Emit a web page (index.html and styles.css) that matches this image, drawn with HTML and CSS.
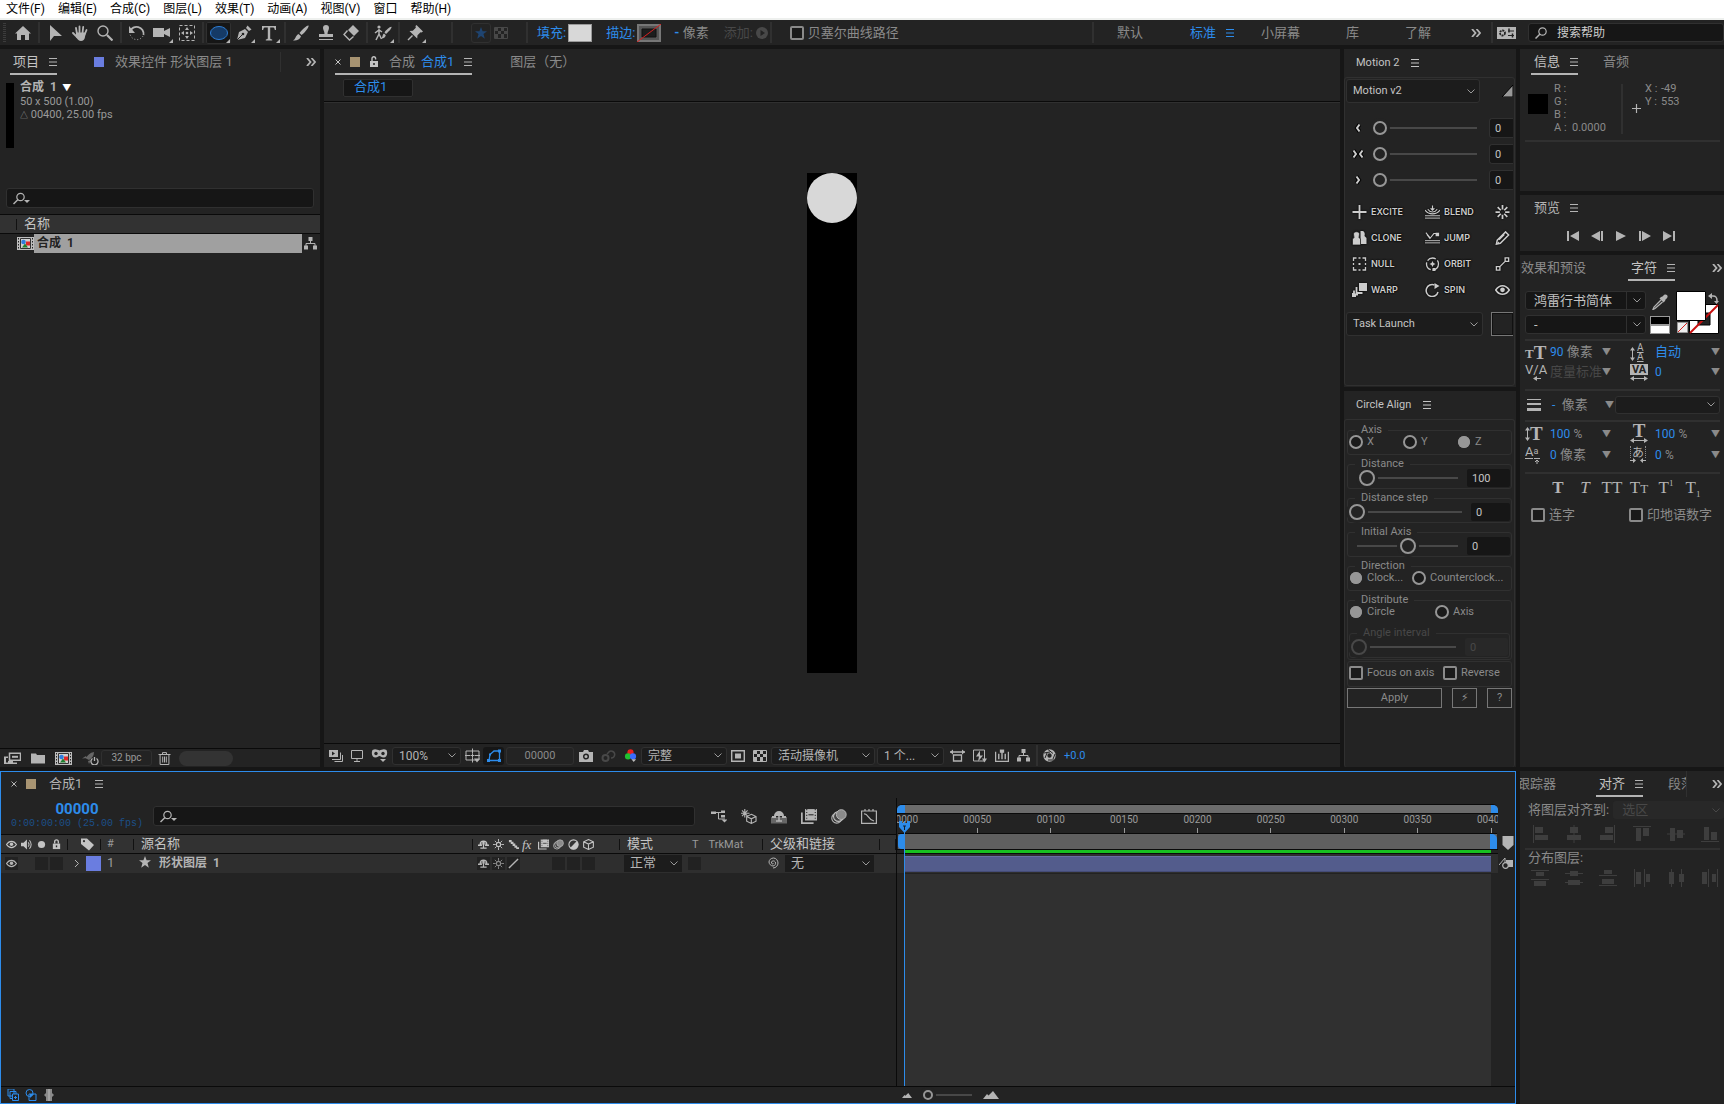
FILE: index.html
```html
<!DOCTYPE html>
<html lang="zh-CN">
<head>
<meta charset="utf-8">
<title>合成 1</title>
<link rel="stylesheet" href="styles.css">
</head>
<body>
<svg class="sprite" aria-hidden="true">
  <symbol id="menu" viewBox="0 0 8 8"><path d="M0 .5h8M0 4h8M0 7.5h8" stroke="currentColor"/></symbol>
  <symbol id="more" viewBox="0 0 10 8"><path d="M1 0l3.5 4L1 8M5.5 0L9 4 5.5 8" fill="none" stroke="currentColor" stroke-width="1.8"/></symbol>
  <symbol id="close" viewBox="0 0 6 6"><path d="M.5.5l5 5M5.5.5l-5 5" stroke="currentColor"/></symbol>
  <symbol id="chev" viewBox="0 0 8 5"><path d="M.5.5L4 4 7.5.5" fill="none" stroke="currentColor"/></symbol>
  <symbol id="home" viewBox="0 0 16 16"><path d="M8 1l8 7.5h-2V15h-4v-5H6v5H2V8.500H0z" fill="currentColor"/></symbol>
  <symbol id="arrow" viewBox="0 0 16 16"><path d="M3 0v16l4-5h8z" fill="currentColor"/></symbol>
  <symbol id="hand" viewBox="0 0 16 16"><path d="M5 9L4 3M7.500 8V1.500M10.500 8l.7-6M12.500 10l2-5M1 8l4 4" stroke="currentColor" stroke-width="1.8" stroke-linecap="round" fill="none"/><path d="M4 7.500h9.500L13 12c-.3 2.500-2 4-4 4s-3.500-1.500-5-4z" fill="currentColor"/></symbol>
  <symbol id="zoomt" viewBox="0 0 16 16"><circle cx="6" cy="6" r="5" fill="none" stroke="currentColor" stroke-width="1.4"/><path d="M10 10l5.500 5.500" stroke="currentColor" stroke-width="2.2"/></symbol>
  <symbol id="rotate" viewBox="0 0 16 16"><path d="M1 6.500A7 7 0 0 1 14.500 10" fill="none" stroke="currentColor" stroke-width="1.8"/><path d="M0 1v7h6z" fill="currentColor"/><path d="M14 11A7 7 0 0 1 1 9" fill="none" stroke="currentColor" stroke-dasharray="1 2"/></symbol>
  <symbol id="cam" viewBox="0 0 18 16"><path d="M0 3h11v3l6-3v9l-6-3v3H0z" fill="currentColor"/></symbol>
  <symbol id="panb" viewBox="0 0 16 16"><path d="M.5.5h15v15H.5z" fill="none" stroke="currentColor" stroke-dasharray="3 2"/><path d="M8 2l2 3H6zM8 14l2-3H6zM2 8l3-2v4zM14 8l-3-2v4z" fill="currentColor"/><circle cx="8" cy="8" r="1.3" fill="currentColor"/></symbol>
  <symbol id="ell" viewBox="0 0 18 14"><ellipse cx="9" cy="7" rx="8.5" ry="6.5" fill="#153a66" stroke="#2f7fd6"/></symbol>
  <symbol id="pen" viewBox="0 0 16 16"><path d="M1 15L3 7l6-3 3 3-3 6zM10 3l1.500-2.500 4 4L13 6z" fill="currentColor"/><path d="M1 15l6-6" stroke="#232323"/><circle cx="7" cy="9" r="1.3" fill="#232323"/></symbol>
  <symbol id="type" viewBox="0 0 16 16"><path d="M1 1h14v4h-1.200c-.3-2-.8-2.500-2.300-2.500H9.200V13c0 1 .5 1.300 2 1.500v.9H4.800v-.9c1.500-.2 2-.5 2-1.500V2.500H4.500C3 2.500 2.500 3 2.200 5H1z" fill="currentColor"/></symbol>
  <symbol id="brush" viewBox="0 0 16 16"><path d="M15.500.5c1 1-4 7.500-7 9.500L6.500 8c2-3 8-8.500 9-7.500zM5.500 9L8 11.300C7 15 3 16 0 15.500 3 14 2 11 5.500 9z" fill="currentColor"/></symbol>
  <symbol id="stamp" viewBox="0 0 16 16"><path d="M5 3a3 3 0 0 1 6 0c0 2-1.500 3-1.500 6H15v3H1V9h5.500C6.500 6 5 5 5 3z" fill="currentColor"/><path d="M1 14.500h14" stroke="currentColor"/></symbol>
  <symbol id="eraser" viewBox="0 0 16 16"><path d="M10 0l6 6-5 5-6-6z" fill="currentColor"/><path d="M4.500 5.500L1 9.500l5.500 5.500h0l4-3.500" fill="none" stroke="currentColor" stroke-width="1.4"/></symbol>
  <symbol id="roto" viewBox="0 0 18 16"><circle cx="5" cy="2" r="1.6" fill="currentColor"/><path d="M5 4v5l-3 6M5 9l2.500 5M1 8l4-3 3 2" stroke="currentColor" stroke-width="1.5" fill="none"/><path d="M17.500 2c.6.8-3 5-5.500 7l-1.500-1.500C12 5 16.800 1 17.500 2zM10 8.500l1.800 1.800C11 13 9 14 7 13.500c2-1 1-3.500 3-5z" fill="currentColor"/></symbol>
  <symbol id="pin" viewBox="0 0 16 16"><path d="M9.500 0L16 6.500l-1.500 1-1-.3-3 3-.3 3.300L5.500 9l-3-3 3.300-.3 3-3L8.500 1z" fill="currentColor"/><path d="M5.500 10.500L1 15" stroke="currentColor" stroke-width="1.5"/></symbol>
  <symbol id="star" viewBox="0 0 12 12"><path d="M6 0l1.600 4.200H12L8.500 7l1.300 4.700L6 9 2.200 11.700 3.500 7 0 4.200h4.400z" fill="currentColor"/></symbol>
  <symbol id="checker" viewBox="0 0 14 12"><path d="M.5.5h13v11H.5z" fill="none" stroke="currentColor"/><path d="M1 1h3v3H1zM7 1h3v3H7zM4 4h3v3H4zM10 4h3v3h-3zM1 7h3v4H1zM7 7h3v4H7z" fill="currentColor"/></symbol>
  <symbol id="play" viewBox="0 0 12 12"><circle cx="6" cy="6" r="6" fill="currentColor"/><path d="M4.500 3v6L9 6z" fill="#232323"/></symbol>
  <symbol id="wsp" viewBox="0 0 19 12"><path d="M0 0h19v12H0z" fill="#b4b4b4"/><circle cx="5.500" cy="6" r="2.5" fill="none" stroke="#232323" stroke-width="1.8" stroke-dasharray="2 .8"/><path d="M11 4h6M11 8.500h6" stroke="#232323"/><path d="M12 1.500v4M15.500 6.500v4" stroke="#232323" stroke-width="1.5"/></symbol>
  <symbol id="search" viewBox="0 0 12 12"><circle cx="7.500" cy="4.500" r="3.7" fill="none" stroke="currentColor" stroke-width="1.2"/><path d="M5 7L.5 11.500" stroke="currentColor" stroke-width="1.5"/></symbol>
  <symbol id="searchd" viewBox="0 0 17 12"><circle cx="7.500" cy="4.500" r="3.7" fill="none" stroke="currentColor" stroke-width="1.2"/><path d="M5 7L.5 11.500" stroke="currentColor" stroke-width="1.5"/><path d="M11 7.500h6l-3 3z" fill="currentColor"/></symbol>
  <symbol id="lock" viewBox="0 0 10 12"><path d="M1 5h8v6H1z" fill="currentColor"/><path d="M3 5V3a2 2 0 0 1 4 0v2" fill="none" stroke="currentColor" stroke-width="1.5"/><path d="M5 7v2" stroke="#232323" stroke-width="1.5"/></symbol>
  <symbol id="unlock" viewBox="0 0 10 12"><path d="M0 5h8v6H0z" fill="currentColor"/><path d="M2 5V2.500a1.800 1.800 0 0 1 3.600 0v1" fill="none" stroke="currentColor" stroke-width="1.4"/><path d="M4 7v2" stroke="#232323" stroke-width="1.5"/></symbol>
  <symbol id="comp" viewBox="0 0 17 13"><path d="M0 0h17v13H0z" fill="#bdbdbd"/><path d="M1.500 1v12M15.500 1v12" stroke="#232323" stroke-dasharray="1.5 1.5"/><path d="M3.500 1.500h10v10h-10z" fill="#d0d0d0" stroke="#333"/><circle cx="6.500" cy="5" r="2.3" fill="#2f7dde"/><path d="M9 4.500h4v4H9z" fill="#e02828"/><path d="M5 10.500l3-4 3 4z" fill="#208030"/></symbol>
  <symbol id="flow" viewBox="0 0 13 13"><path d="M4.500 0h4v4h-4zM0 8.500h4v4H0zM9 8.500h4v4H9z" fill="currentColor"/><path d="M6.500 4v3M2 9V6.500h9V9" fill="none" stroke="currentColor"/></symbol>
  <symbol id="interp" viewBox="0 0 17 12"><path d="M5.500.8h11v7h-11z" fill="none" stroke="currentColor" stroke-width="1.5"/><path d="M8 4.300h6" stroke="currentColor" stroke-width="2"/><path d="M0 4h4v1.500H2V10h11v1.500H0z" fill="currentColor"/><path d="M4 8.500h5V11H4z" fill="currentColor"/></symbol>
  <symbol id="folder" viewBox="0 0 14 11"><path d="M0 1h5l1 1.500h8V11H0z" fill="currentColor"/></symbol>
  <symbol id="rocket" viewBox="0 0 17 13"><path d="M12 0c0 4-2 6-5 8L4 6.500C5.500 3 8 .5 12 0zM0 6.500L4 4l1 2zM6 9l3-1-2 4z" fill="#666"/><path d="M10.500 6.500a3.500 3.500 0 1 0 4 0M12.500 5v4" fill="none" stroke="currentColor" stroke-width="1.3"/></symbol>
  <symbol id="trash" viewBox="0 0 12 13"><path d="M0 2.500h12M4 2V.6h4V2M1.600 3v9.500h8.800V3M4.200 4.500v6M6 4.500v6M7.800 4.500v6" fill="none" stroke="currentColor"/></symbol>
  <symbol id="prev" viewBox="0 0 14 12"><path d="M0 0h9v7H0z" fill="currentColor"/><path d="M3 1.500v4l3-2z" fill="#232323"/><path d="M3 9.500h8.500V2.500M5.500 11.500h8V5" fill="none" stroke="currentColor"/></symbol>
  <symbol id="monitor" viewBox="0 0 12 12"><path d="M.5.5h11v8H.5zM3 11.500h6M6 9v2" fill="none" stroke="currentColor"/></symbol>
  <symbol id="mask" viewBox="0 0 17 13"><path d="M1.500 1c3-1.500 5 0 7 .5C10.500 1 12.500-.5 15.500 1 17 4 16 8.500 12.500 8.500 10.500 8.500 9.500 7 8.500 7S6.500 8.500 4.500 8.500C1 8.500 0 4 1.500 1z" fill="currentColor"/><circle cx="5" cy="4.500" r="1.7" fill="#232323"/><circle cx="12" cy="4.500" r="1.7" fill="#232323"/><path d="M9 10h6l-3 3z" fill="currentColor"/></symbol>
  <symbol id="grid" viewBox="0 0 15 14"><path d="M1 2.500h13v9H1zM7.500 0v5M7.500 9v5M0 7h5M10 7h5M5.500 7h4M7.500 5v4" fill="none" stroke="currentColor"/><path d="M9 10h6l-3 4z" fill="currentColor"/></symbol>
  <symbol id="shape" viewBox="0 0 14 13"><path d="M2 11L3 5l4-3.500h5.500V11z" fill="none" stroke="currentColor" stroke-width="1.3"/><path d="M0 9.500h3v3H0zM11 9.500h3v3h-3zM11 0h3v3h-3zM2 4h2v2H2z" fill="currentColor"/></symbol>
  <symbol id="photo" viewBox="0 0 14 12"><path d="M0 2h4l1-2h4l1 2h4v10H0z" fill="currentColor"/><circle cx="7" cy="6.500" r="2.3" fill="none" stroke="#232323" stroke-width="1.5"/></symbol>
  <symbol id="ghost" viewBox="0 0 15 13"><circle cx="4.500" cy="9" r="3" fill="none" stroke="currentColor" stroke-width="2"/><path d="M7 4a3.500 3.500 0 1 1 3 5M6 5l3-3" fill="none" stroke="currentColor" stroke-width="1.5"/></symbol>
  <symbol id="rgb" viewBox="0 0 12 14"><circle cx="6" cy="3.500" r="3.3" fill="#e82020"/><circle cx="3.300" cy="8" r="3.3" fill="#20c030"/><circle cx="8.700" cy="8" r="3.3" fill="#3a6cff"/><path d="M7 11h5l-2.500 3z" fill="#bbb"/></symbol>
  <symbol id="roi" viewBox="0 0 14 12"><path d="M.7.7h12.600v10.600H.7z" fill="none" stroke="currentColor" stroke-width="1.4"/><path d="M4 3.500h6v5H4z" fill="currentColor"/></symbol>
  <symbol id="par" viewBox="0 0 15 12"><path d="M0 2.500h15M3.500 5.500h8v6h-8z" fill="none" stroke="currentColor" stroke-width="1.3"/><path d="M3 0v5L0 2.500zM12 0v5l3-2.500z" fill="currentColor"/></symbol>
  <symbol id="fast" viewBox="0 0 14 13"><path d="M.5.5h11v11H.5z" fill="none" stroke="currentColor"/><path d="M7 1L3 7h3l-1 5 5-6H7z" fill="currentColor"/><path d="M9 9h5l-2.500 4z" fill="currentColor"/></symbol>
  <symbol id="tlb" viewBox="0 0 13 12"><path d="M.5 2v9h12V2M3.500 4v5M9.500 4v5M6.500 1v8" fill="none" stroke="currentColor" stroke-width="1.3"/><path d="M4.500 0h4v3h-4z" fill="currentColor"/></symbol>
  <symbol id="shutter" viewBox="0 0 13 13"><circle cx="6.500" cy="6.500" r="4.2" fill="none" stroke="currentColor" stroke-width="4"/><path d="M1 4l6-1M5 .5l5 4M12 5l-2 5M11 11H5M2 9l2-5" stroke="#232323"/></symbol>
  <symbol id="eye" viewBox="0 0 14 10"><path d="M.7 5C3 1.500 5 1 7 1s4 .5 6.300 4C11 8.500 9 9 7 9S3 8.500.7 5z" fill="none" stroke="currentColor" stroke-width="1.5"/><circle cx="7" cy="4.800" r="2.2" fill="currentColor"/></symbol>
  <symbol id="speaker" viewBox="0 0 13 12"><path d="M0 4h3l4-4v12L3 8H0z" fill="currentColor"/><path d="M8.500 3.500q2 2.500 0 5M10 1q4 5 0 10" fill="none" stroke="currentColor" stroke-width="1.2"/></symbol>
  <symbol id="dot" viewBox="0 0 8 8"><circle cx="4" cy="4" r="3.2" fill="currentColor"/></symbol>
  <symbol id="tag" viewBox="0 0 13 12"><path d="M0 0h6l7 6.500L8 12 0 5.500z" fill="currentColor"/><circle cx="3" cy="2.700" r="1.1" fill="#323232"/></symbol>
  <symbol id="shy" viewBox="0 0 14 12"><path d="M2 6a5 5 0 0 1 10 0zM0 6h5v2H0zM9 6h5v2H9z" fill="currentColor"/><path d="M7 5v6M3 10.500h8" stroke="currentColor" stroke-width="1.5"/><path d="M5 3v3M9 3v3" stroke="#323232"/></symbol>
  <symbol id="sun" viewBox="0 0 12 12"><circle cx="6" cy="6" r="2.3" fill="none" stroke="currentColor" stroke-width="1.2"/><path d="M6 0v3M6 9v3M0 6h3M9 6h3M2 2l2 2M8 8l2 2M10 2L8 4M4 8l-2 2" stroke="currentColor"/></symbol>
  <symbol id="qual" viewBox="0 0 12 12"><path d="M1 1h3v2h2v2h2v2h2v2h2v2H9V9.500H7v-2H5v-2H3v-2H1z" fill="currentColor"/></symbol>
  <symbol id="slash" viewBox="0 0 12 12"><path d="M1 11L11 1" stroke="currentColor" stroke-width="1.5"/></symbol>
  <symbol id="film" viewBox="0 0 14 13"><path d="M3.500 0H14v10H3.500z" fill="currentColor"/><path d="M0 3h1.500v8.500H11V13H0z" fill="currentColor"/><path d="M5 0v10M12.500 0v10" stroke="#323232" stroke-dasharray="1 1.5"/><path d="M6.500 5h4.500" stroke="#323232"/></symbol>
  <symbol id="blur" viewBox="0 0 14 13"><circle cx="5" cy="8" r="4.3" fill="none" stroke="currentColor"/><circle cx="6.500" cy="6.500" r="4.3" fill="#444" stroke="#bbb"/><circle cx="9" cy="4.800" r="4.3" fill="#8a8a8a" stroke="#bbb" stroke-width=".8"/></symbol>
  <symbol id="adj" viewBox="0 0 12 12"><circle cx="6" cy="6" r="5" fill="none" stroke="currentColor" stroke-width="1.2"/><path d="M9.700 2.300a5 5 0 0 1-7.400 7.400z" fill="currentColor"/></symbol>
  <symbol id="cube" viewBox="0 0 12 12"><path d="M6 .6L11.300 3v6L6 11.400.7 9V3zM.7 3L6 5.500 11.300 3M6 5.500v6" fill="none" stroke="currentColor" stroke-width="1.2"/></symbol>
  <symbol id="mini" viewBox="0 0 16 12"><path d="M0 1h5v2.500H0zM10 0h4v2.500h-4zM10 4.500h4V7h-4z" fill="currentColor"/><path d="M5 2h5M7.500 2v6.500H10M10 8.500h4" fill="none" stroke="currentColor"/><path d="M10.500 9h6l-3 3z" fill="currentColor"/></symbol>
  <symbol id="draft" viewBox="0 0 17 16"><path d="M4 0v9M0 4.500h9M1 1.500l6 6M7 1.500l-6 6" stroke="currentColor" stroke-width="1.2"/><path d="M11 5.600l5 2.400v5L11 15.400 6 13V8zM6 8l5 2.500L16 8M11 10.500v5" fill="#232323" stroke="currentColor" stroke-width="1.2"/></symbol>
  <symbol id="shyw" viewBox="0 0 16 14"><path d="M0 7.500h16V14H0z" fill="#666"/><path d="M3 6.500a5 5 0 0 1 10 0zM1 6.500h4v2H1zM11 6.500h4v2h-4z" fill="currentColor"/><path d="M8 6v6M5 11.500h6" stroke="currentColor" stroke-width="1.5"/></symbol>
  <symbol id="graph" viewBox="0 0 16 15"><path d="M.6 2h14.800v12.400H.6zM4 0v2M8 0v2M12 0v2M3 5c4-1 4 6 10 7" fill="none" stroke="currentColor" stroke-width="1.2"/></symbol>
  <symbol id="spiral" viewBox="0 0 12 12"><path d="M6.500 6.500c-1 1-2.500 0-2-1.500s3-1.500 3.800 0S8 9 6 9 2 7 2 5 4 1 6.500 1 11 3.500 11 6s-2 5-5 5" fill="none" stroke="currentColor"/></symbol>
  <symbol id="shield" viewBox="0 0 12 14"><path d="M.5 0h11v9L6 14 .5 9z" fill="currentColor"/></symbol>
  <symbol id="bin" viewBox="0 0 14 12"><path d="M7 3h7v7H7z" fill="currentColor"/><path d="M0 8l6-7v6" fill="none" stroke="currentColor"/><circle cx="6.500" cy="8.500" r="2.8" fill="#232323" stroke="currentColor" stroke-width="1.2"/></symbol>
  <symbol id="lay" viewBox="0 0 12 12"><path d="M1 0h6v7H1zM3 2.500h6v7H3z" fill="none" stroke="currentColor"/><path d="M5.500 5h6v6.500h-6z" fill="#232323" stroke="currentColor"/><path d="M8.500 7v3M7 8.500h3" stroke="currentColor"/></symbol>
  <symbol id="modes" viewBox="0 0 12 12"><circle cx="4.500" cy="4" r="3.5" fill="none" stroke="currentColor"/><path d="M4 5h7v6.500H4z" fill="none" stroke="currentColor"/><path d="M5 5h4L5 9z" fill="currentColor"/></symbol>
  <symbol id="brace" viewBox="0 0 10 12"><path d="M2 0h6v4l2 2-2 2v4H2V8L0 6l2-2z" fill="#8a8a8a"/><path d="M5 0v12" stroke="#bbb"/></symbol>
  <symbol id="mtn" viewBox="0 0 16 8"><path d="M0 8l4-5 1.500 1.500L10 0l6 8z" fill="currentColor"/></symbol>
  <symbol id="plus" viewBox="0 0 14 14"><path d="M7 0v14M0 7h14" stroke="currentColor" stroke-width="1.8"/></symbol>
  <symbol id="blend" viewBox="0 0 16 14"><path d="M0 11h16M0 13.500h16" stroke="currentColor"/><path d="M0 5q3 4 8 4t8-4M3 4q2 3 5 3t5-3M8 0v5M6 3l2 2 2-2" fill="none" stroke="currentColor" stroke-width="1.2"/></symbol>
  <symbol id="burst" viewBox="0 0 16 16"><path d="M8 0v5M8 11v5M0 8h5M11 8h5M2.500 2.500L6 6M10 10l3.500 3.500M13.500 2.500L10 6M6 10l-3.500 3.500" stroke="currentColor" stroke-width="2"/></symbol>
  <symbol id="clone" viewBox="0 0 14 14"><path d="M8 0c3-.5 5 1 4 5l2 2v6H8z" fill="currentColor"/><path d="M1 3c0-3 6-3 6 0L6.500 6.500 8 8v6H0V8l1.500-1.500z" fill="currentColor" stroke="#232323" stroke-width=".8"/></symbol>
  <symbol id="jump" viewBox="0 0 17 12"><path d="M0 11.500h17M0 9h17" stroke="currentColor"/><path d="M1 0l5 6 4-5h3M2 2l4 5" fill="none" stroke="currentColor" stroke-width="1.2"/><path d="M12 0h4v4h-4z" fill="currentColor"/></symbol>
  <symbol id="pencil" viewBox="0 0 16 16"><path d="M1 15l1-4.500L11.500 1l3.500 3.500L5.500 14zM4 10l6-6" fill="none" stroke="currentColor" stroke-width="1.7"/><path d="M1 15l2-3 1.500 1.500z" fill="currentColor"/></symbol>
  <symbol id="null" viewBox="0 0 14 14"><path d="M1 4V1h3M10 1h3v3M13 10v3h-3M4 13H1v-3M6 1h2M1 6v2M13 6v2M6 13h2" fill="none" stroke="currentColor" stroke-width="1.3"/><path d="M6 6h2v2H6z" fill="currentColor"/></symbol>
  <symbol id="orbit" viewBox="0 0 14 14"><circle cx="7" cy="7" r="6" fill="none" stroke="currentColor" stroke-dasharray="9 2" stroke-width="1.3"/><path d="M7 4l1 2 2 1-2 1-1 2-1-2-2-1 2-1zM7 11h3v3H7z" fill="currentColor"/></symbol>
  <symbol id="link" viewBox="0 0 16 16"><path d="M11 1h4v4h-4zM1 11h4v4H1zM5 11l6-6" fill="none" stroke="currentColor" stroke-width="1.5"/></symbol>
  <symbol id="warp" viewBox="0 0 15 14"><path d="M7 0h8v8H7z" fill="currentColor"/><path d="M4.500 4v6h6M2 7.500v4h4M.5 10v3.500H4" fill="none" stroke="currentColor" stroke-width="1.8"/></symbol>
  <symbol id="spin" viewBox="0 0 14 14"><path d="M12.500 9A6 6 0 1 1 9 2" fill="none" stroke="currentColor" stroke-width="1.5"/><path d="M9 0l5 3-5 3z" fill="currentColor"/></symbol>
  <symbol id="tri" viewBox="0 0 11 12"><path d="M0 12L11 0v12z" fill="#999" stroke="#000"/></symbol>
  <symbol id="el" viewBox="0 0 12 10"><path d="M7.500 1.500L5 5l2.500 3.500" fill="none" stroke="#000" stroke-width="4"/><path d="M7.500 1.500L5 5l2.500 3.500" fill="none" stroke="#ccc" stroke-width="2"/></symbol>
  <symbol id="er" viewBox="0 0 12 10"><path d="M4.500 1.500L7 5 4.500 8.500" fill="none" stroke="#000" stroke-width="4"/><path d="M4.500 1.500L7 5 4.500 8.500" fill="none" stroke="#ccc" stroke-width="2"/></symbol>
  <symbol id="eb" viewBox="0 0 12 10"><path d="M1.500 1.500L4 5 1.500 8.500M10.500 1.500L8 5l2.500 3.500" fill="none" stroke="#000" stroke-width="4"/><path d="M1.500 1.500L4 5 1.500 8.500M10.500 1.500L8 5l2.500 3.500" fill="none" stroke="#ccc" stroke-width="2"/></symbol>
  <symbol id="first" viewBox="0 0 12 10"><path d="M0 0h2v10H0zM12 0v10L3 5z" fill="currentColor"/></symbol>
  <symbol id="back" viewBox="0 0 12 10"><path d="M10 0h2v10h-2zM9 0v10L0 5z" fill="currentColor"/></symbol>
  <symbol id="go" viewBox="0 0 10 10"><path d="M0 0v10l10-5z" fill="currentColor"/></symbol>
  <symbol id="fwd" viewBox="0 0 12 10"><path d="M0 0h2v10H0zM3 0v10l9-5z" fill="currentColor"/></symbol>
  <symbol id="last" viewBox="0 0 12 10"><path d="M10 0h2v10h-2zM0 0v10l9-5z" fill="currentColor"/></symbol>
  <symbol id="dropper" viewBox="0 0 16 16"><path d="M9 3l1.500-.5C12 0 14 0 15 1s1 3-1.500 4.500L13 7l-1.500 1.500-4-4z" fill="currentColor"/><path d="M9 6l-7 7-1 2.500 2-1L10.500 8" fill="none" stroke="currentColor" stroke-width="1.3"/></symbol>
  <symbol id="swap" viewBox="0 0 11 12"><path d="M2 3h3c3 0 4 1 4 5" fill="none" stroke="currentColor" stroke-width="1.6"/><path d="M0 3l4-3v6zM6 8h5l-2.500 3z" fill="currentColor"/></symbol>
  <symbol id="vresize" viewBox="0 0 5 14"><path d="M2.500 1v12" stroke="currentColor"/><path d="M0 3.500L2.500 0 5 3.500zM0 10.500L2.500 14 5 10.500z" fill="currentColor"/></symbol>
  <symbol id="hresize" viewBox="0 0 18 5"><path d="M2 2.500h14" stroke="currentColor"/><path d="M4 0L0 2.500 4 5zM14 0l4 2.500L14 5z" fill="currentColor"/></symbol>
  <symbol id="larrow" viewBox="0 0 8 5"><path d="M2 2.500h6" stroke="currentColor"/><path d="M4 0L0 2.500 4 5z" fill="currentColor"/></symbol>
  <symbol id="base" viewBox="0 0 15 6"><path d="M0 .5h8M9 .5h6" stroke="currentColor"/><path d="M12 2v4M10 4l2-2 2 2" fill="none" stroke="currentColor"/></symbol>
  <symbol id="inarr" viewBox="0 0 16 5"><path d="M0 2.500h4M12 2.500h4" stroke="currentColor"/><path d="M3 0l3 2.500L3 5zM13 0l-3 2.500L13 5z" fill="currentColor"/></symbol>
  <symbol id="lines" viewBox="0 0 14 12"><path d="M0 .5h14" stroke="currentColor"/><path d="M0 5h14" stroke="currentColor" stroke-width="2"/><path d="M0 10.500h14" stroke="currentColor" stroke-width="3"/></symbol>
  <symbol id="al1" viewBox="0 0 18 18"><path d="M2.500 0v18" stroke="currentColor"/><path d="M4 2h8v6H4zM4 10h13v5H4z" fill="currentColor"/></symbol>
  <symbol id="al2" viewBox="0 0 18 18"><path d="M9 0v18" stroke="currentColor"/><path d="M5 2h8v6H5zM2 10h14v5H2z" fill="currentColor"/></symbol>
  <symbol id="al3" viewBox="0 0 18 18"><path d="M15.500 0v18" stroke="currentColor"/><path d="M6 2h8v6H6zM1 10h13v5H1z" fill="currentColor"/></symbol>
  <symbol id="al4" viewBox="0 0 18 18"><path d="M0 1.500h18" stroke="currentColor"/><path d="M3 3h5v13H3zM10 3h6v8h-6z" fill="currentColor"/></symbol>
  <symbol id="al5" viewBox="0 0 18 18"><path d="M0 9h18" stroke="currentColor"/><path d="M3 3h5v13H3zM10 5h6v8h-6z" fill="currentColor"/></symbol>
  <symbol id="al6" viewBox="0 0 18 18"><path d="M0 16.500h18" stroke="currentColor"/><path d="M3 2h5v13H3zM10 7h6v8h-6z" fill="currentColor"/></symbol>
  <symbol id="di1" viewBox="0 0 18 18"><path d="M0 1.500h18M0 10.500h18" stroke="currentColor"/><path d="M5 3h8v4H5zM3 12h12v5H3z" fill="currentColor"/></symbol>
  <symbol id="di2" viewBox="0 0 18 18"><path d="M0 4.500h18M0 13.500h18" stroke="currentColor"/><path d="M5 2h8v5H5zM3 11h12v5H3z" fill="currentColor"/></symbol>
  <symbol id="di3" viewBox="0 0 18 18"><path d="M0 6.500h18M0 16.500h18" stroke="currentColor"/><path d="M5 1h8v4H5zM3 10h12v5H3z" fill="currentColor"/></symbol>
  <symbol id="di4" viewBox="0 0 18 18"><path d="M1.500 0v18M11.500 0v18" stroke="currentColor"/><path d="M3 3h5v12H3zM13 5h4v8h-4z" fill="currentColor"/></symbol>
  <symbol id="di5" viewBox="0 0 18 18"><path d="M4.500 0v18M14.500 0v18" stroke="currentColor"/><path d="M2 3h5v12H2zM12 5h5v8h-5z" fill="currentColor"/></symbol>
  <symbol id="di6" viewBox="0 0 18 18"><path d="M7.500 0v18M16.500 0v18" stroke="currentColor"/><path d="M1 3h5v12H1zM11 5h4v8h-4z" fill="currentColor"/></symbol>
</svg>

<nav class="menubar">
  <a href="#">文件(F)</a><a href="#">编辑(E)</a><a href="#">合成(C)</a><a href="#">图层(L)</a><a href="#">效果(T)</a><a href="#">动画(A)</a><a href="#">视图(V)</a><a href="#">窗口</a><a href="#">帮助(H)</a>
</nav>

<header class="toolbar">
  <div class="tools">
    <i class="grip"></i>
    <button class="tool" aria-label="主页"><svg class="s16"><use href="#home"/></svg></button><i class="sep"></i>
    <button class="tool" aria-label="选取"><svg class="s16"><use href="#arrow"/></svg></button>
    <button class="tool" aria-label="手形"><svg class="s16"><use href="#hand"/></svg></button>
    <button class="tool" aria-label="缩放"><svg class="s16"><use href="#zoomt"/></svg></button><i class="sep"></i>
    <button class="tool" aria-label="旋转"><svg class="s16"><use href="#rotate"/></svg></button>
    <button class="tool sub" aria-label="摄像机"><svg class="s18"><use href="#cam"/></svg></button>
    <button class="tool" aria-label="锚点"><svg class="s16"><use href="#panb"/></svg></button><i class="sep"></i>
    <button class="tool sub on" aria-label="椭圆"><svg class="s18"><use href="#ell"/></svg></button>
    <button class="tool sub" aria-label="钢笔"><svg class="s16"><use href="#pen"/></svg></button>
    <button class="tool sub" aria-label="文字"><svg class="s16"><use href="#type"/></svg></button><i class="sep"></i>
    <button class="tool" aria-label="画笔"><svg class="s16"><use href="#brush"/></svg></button>
    <button class="tool" aria-label="图章"><svg class="s16"><use href="#stamp"/></svg></button>
    <button class="tool" aria-label="橡皮擦"><svg class="s16"><use href="#eraser"/></svg></button><i class="sep"></i>
    <button class="tool sub" aria-label="Roto"><svg class="s18"><use href="#roto"/></svg></button><i class="sep"></i>
    <button class="tool sub" aria-label="操控点"><svg class="s16"><use href="#pin"/></svg></button>
  </div>
  <div class="options">
    <i class="sep"></i>
    <button class="starbox" aria-label="形状"><svg class="s12"><use href="#star"/></svg></button>
    <svg class="s14 dim2"><use href="#checker"/></svg>
    <i class="sep wide"></i>
    <span class="blue">填充:</span><button class="fill" aria-label="填充颜色"></button>
    <span class="blue">描边:</span><button class="stroke" aria-label="描边颜色"><svg viewBox="0 0 24 18"><path d="M5 5h14v8H5z" fill="#1d1d1d" stroke="#111"/><path d="M0 18L24 0" stroke="#d82020"/></svg></button>
    <span class="px"><b class="blue">-</b> 像素</span>
    <span class="dim2 add">添加:</span><svg class="s12 dim2"><use href="#play"/></svg>
    <i class="sep"></i>
    <label class="check"><input type="checkbox">贝塞尔曲线路径</label>
  </div>
  <nav class="spaces">
    <i class="sep"></i>
    <a href="#">默认</a><a href="#" class="blue">标准 <svg class="s8"><use href="#menu"/></svg></a><a href="#">小屏幕</a><a href="#">库</a><a href="#">了解</a>
    <svg class="more"><use href="#more"/></svg><i class="sep"></i>
  </nav>
  <svg class="wsp"><use href="#wsp"/></svg>
  <label class="help"><svg class="s12"><use href="#search"/></svg><input type="text" placeholder="搜索帮助" aria-label="搜索帮助"></label>
</header>

<main class="work">
  <section class="panel project">
    <div class="tabs"><a href="#" class="tab on">项目<svg class="s8"><use href="#menu"/></svg></a>
      <a href="#" class="tab fx"><i class="chip violet"></i>效果控件 形状图层 1</a><i class="tsep"></i><svg class="more"><use href="#more"/></svg></div>
    <div class="asset"><i class="thumb"></i><div><b>合成&nbsp; 1</b>&nbsp; <span class="wh">▼</span><br>50 x 500 (1.00)<br><small>△</small> 00400, 25.00 fps</div></div>
    <label class="search"><svg class="s17"><use href="#searchd"/></svg><input type="text" aria-label="搜索项目"></label>
    <table class="files"><thead><tr><th class="c1"></th><th class="nm">名称</th><th class="c3"></th></tr></thead>
      <tbody><tr><td class="c1"><svg class="s17"><use href="#comp"/></svg></td><td class="sel">合成&nbsp; 1</td><td class="c3"><svg class="s13"><use href="#flow"/></svg></td></tr></tbody></table>
    <footer class="pfoot">
      <svg class="s17"><use href="#interp"/></svg><svg class="s14"><use href="#folder"/></svg><svg class="s17"><use href="#comp"/></svg><svg class="s17"><use href="#rocket"/></svg>
      <button class="bpc">32 bpc</button><svg class="s13"><use href="#trash"/></svg><i class="pill"></i>
    </footer>
  </section>

  <section class="panel viewer">
    <div class="tabs"><a href="#" class="tab on cur"><svg class="s6"><use href="#close"/></svg><i class="chip tan"></i><svg class="lk"><use href="#unlock"/></svg><span class="mut">合成</span> <span class="blue">合成1</span><svg class="s8"><use href="#menu"/></svg></a><a href="#" class="tab">图层（无）</a></div>
    <div class="crumbs"><a href="#" class="blue">合成1</a></div>
    <div class="stage"><div class="frame"><i class="ball"></i></div></div>
    <footer class="vfoot">
      <svg class="s14"><use href="#prev"/></svg><svg class="s12"><use href="#monitor"/></svg><svg class="s17"><use href="#mask"/></svg>
      <span class="sel-w w69"><select aria-label="放大率"><option>100%</option></select><svg><use href="#chev"/></svg></span>
      <svg class="s15"><use href="#grid"/></svg><button class="well blue" aria-label="蒙版"><svg class="s14"><use href="#shape"/></svg></button>
      <button class="time">00000</button>
      <svg class="s14"><use href="#photo"/></svg><svg class="s15 dim2"><use href="#ghost"/></svg><svg class="s13"><use href="#rgb"/></svg>
      <span class="sel-w w86"><select aria-label="分辨率"><option>完整</option></select><svg><use href="#chev"/></svg></span>
      <svg class="s14"><use href="#roi"/></svg><svg class="s14"><use href="#checker"/></svg>
      <span class="sel-w w104"><select aria-label="视图"><option>活动摄像机</option></select><svg><use href="#chev"/></svg></span>
      <span class="sel-w w67"><select aria-label="视图数"><option>1 个...</option></select><svg><use href="#chev"/></svg></span>
      <svg class="s15"><use href="#par"/></svg><svg class="s14"><use href="#fast"/></svg><svg class="s14"><use href="#tlb"/></svg><svg class="s13"><use href="#flow"/></svg>
      <i class="sep"></i><svg class="s13"><use href="#shutter"/></svg><span class="blue">+0.0</span>
    </footer>
  </section>

  <div class="stack">
    <section class="panel motion">
      <h2>Motion 2<svg class="s8"><use href="#menu"/></svg></h2>
      <div class="box">
        <div class="row"><span class="sel-w big w134"><select aria-label="版本"><option>Motion v2</option></select><svg><use href="#chev"/></svg></span><svg class="tri"><use href="#tri"/></svg></div>
        <div class="ease"><svg><use href="#el"/></svg><input type="range" value="0" aria-label="缓入"><input type="text" value="0" aria-label="缓入值"></div>
        <div class="ease"><svg><use href="#eb"/></svg><input type="range" value="0" aria-label="缓动"><input type="text" value="0" aria-label="缓动值"></div>
        <div class="ease"><svg><use href="#er"/></svg><input type="range" value="0" aria-label="缓出"><input type="text" value="0" aria-label="缓出值"></div>
        <div class="acts">
          <button><svg><use href="#plus"/></svg>EXCITE</button><button><svg><use href="#blend"/></svg>BLEND</button><button aria-label="Burst"><svg><use href="#burst"/></svg></button>
          <button><svg><use href="#clone"/></svg>CLONE</button><button><svg><use href="#jump"/></svg>JUMP</button><button aria-label="Name"><svg><use href="#pencil"/></svg></button>
          <button><svg><use href="#null"/></svg>NULL</button><button><svg><use href="#orbit"/></svg>ORBIT</button><button aria-label="Rope"><svg><use href="#link"/></svg></button>
          <button><svg><use href="#warp"/></svg>WARP</button><button><svg><use href="#spin"/></svg>SPIN</button><button aria-label="Stare"><svg><use href="#eye"/></svg></button>
        </div>
        <div class="row launch"><span class="sel-w big w137"><select aria-label="任务"><option>Task Launch</option></select><svg><use href="#chev"/></svg></span><button class="go" aria-label="Go"></button></div>
      </div>
    </section>
    <section class="panel circle">
      <h2>Circle Align<svg class="s8"><use href="#menu"/></svg></h2>
      <form class="box">
        <fieldset class="three"><legend>Axis</legend><label><input type="radio" name="ax">X</label><label><input type="radio" name="ax">Y</label><label><input type="radio" name="ax" checked>Z</label></fieldset>
        <fieldset class="sl a"><legend>Distance</legend><input type="range" value="0" aria-label="Distance"><input type="text" value="100" aria-label="Distance value"></fieldset>
        <fieldset class="sl b"><legend>Distance step</legend><input type="range" value="0" aria-label="Distance step"><input type="text" value="0" aria-label="Distance step value"></fieldset>
        <fieldset class="sl c"><legend>Initial Axis</legend><input type="range" value="50" aria-label="Initial axis"><input type="text" value="0" aria-label="Initial axis value"></fieldset>
        <fieldset class="two"><legend>Direction</legend><label><input type="radio" name="dir" checked>Clock...</label><label><input type="radio" name="dir">Counterclock...</label></fieldset>
        <fieldset class="dist"><legend>Distribute</legend>
          <div class="half"><label><input type="radio" name="dis" checked>Circle</label><label><input type="radio" name="dis">Axis</label></div>
          <fieldset class="sl off" disabled><legend>Angle interval</legend><input type="range" value="0" aria-label="Angle interval"><input type="text" value="0" aria-label="Angle interval value"></fieldset></fieldset>
        <div class="checks"><label class="check"><input type="checkbox">Focus on axis</label><label class="check"><input type="checkbox">Reverse</label></div>
        <div class="btns"><button type="button" class="apply">Apply</button><button type="button">⚡︎</button><button type="button">?</button></div>
      </form>
    </section>
  </div>

  <div class="stack">
    <section class="panel info">
      <div class="tabs"><a href="#" class="tab on">信息<svg class="s8"><use href="#menu"/></svg></a><a href="#" class="tab">音频</a></div>
      <div class="readout"><i class="sw"></i><dl><dt>R :</dt><dd></dd><dt>G :</dt><dd></dd><dt>B :</dt><dd></dd><dt>A :</dt><dd>0.0000</dd></dl><i class="bar"></i><svg class="cross"><use href="#plus"/></svg><dl><dt>X :</dt><dd>-49</dd><dt>Y :</dt><dd>553</dd></dl></div>
      <hr>
    </section>
    <section class="panel preview">
      <div class="tabs"><a href="#" class="tab">预览<svg class="s8"><use href="#menu"/></svg></a></div>
      <div class="transport"><button aria-label="首帧"><svg><use href="#first"/></svg></button><button aria-label="上一帧"><svg><use href="#back"/></svg></button><button aria-label="播放"><svg><use href="#go"/></svg></button><button aria-label="下一帧"><svg><use href="#fwd"/></svg></button><button aria-label="末帧"><svg><use href="#last"/></svg></button></div>
    </section>
    <section class="panel chars">
      <div class="tabs"><a href="#" class="tab">效果和预设</a><a href="#" class="tab on">字符<svg class="s8"><use href="#menu"/></svg></a><svg class="more"><use href="#more"/></svg></div>
      <div class="fonts">
        <div class="fsel"><span class="sel-w split"><select aria-label="字体"><option>鸿雷行书简体</option></select><svg><use href="#chev"/></svg></span><span class="sel-w split"><select aria-label="样式"><option>-</option></select><svg><use href="#chev"/></svg></span></div>
        <div class="drop"><svg class="s16"><use href="#dropper"/></svg><i class="bw"></i></div>
        <svg class="swatches" viewBox="0 0 44 44"><path d="M13.500 13.500h29v29h-29z" fill="#fff" stroke="#000"/><path d="M22 22h12v12H22z" fill="#232323" stroke="#000"/><path d="M14 42L42 14" stroke="#c81010" stroke-width="2"/><path d="M.5.5h29v29H.5z" fill="#fff" stroke="#000"/><path d="M1.500 31.500h10v10h-10z" fill="#eee" stroke="#999"/><path d="M2 41l9-9" stroke="#d82020"/><svg x="32" y="2" width="11" height="12"><use href="#swap"/></svg></svg>
      </div>
      <hr>
      <div class="met">
        <span class="ic tt"><small>T</small>T</span><span class="v"><b>90</b> 像素</span><i class="dn">▼</i>
        <span class="ic lead"><svg class="vr"><use href="#vresize"/></svg><span><u>A</u><u>A</u></span></span><span class="v"><b class="cj">自动</b></span><i class="dn">▼</i>
        <span class="ic va"><span>V/A</span><svg class="ar"><use href="#larrow"/></svg></span><span class="v dim2">度量标准</span><i class="dn">▼</i>
        <span class="ic vab"><span>VA</span><svg class="hr"><use href="#hresize"/></svg></span><span class="v"><b>0</b></span><i class="dn">▼</i>
      </div>
      <hr>
      <div class="line"><svg class="s14"><use href="#lines"/></svg><span class="v"><b>-</b>&nbsp; 像素</span><i class="dn">▼</i><span class="sel-w"><select aria-label="描边方式"><option></option></select><svg><use href="#chev"/></svg></span></div>
      <hr>
      <div class="met tall">
        <span class="ic tt"><svg class="vr"><use href="#vresize"/></svg>T</span><span class="v"><b>100</b> <small>%</small></span><i class="dn">▼</i>
        <span class="ic tw"><span>T</span><svg class="hr"><use href="#hresize"/></svg></span><span class="v"><b>100</b> <small>%</small></span><i class="dn">▼</i>
        <span class="ic va"><span>A<sup>a</sup></span><svg class="bl"><use href="#base"/></svg></span><span class="v"><b>0</b> 像素</span><i class="dn">▼</i>
        <span class="ic tsu"><span>あ</span><svg class="in"><use href="#inarr"/></svg></span><span class="v"><b>0</b> <small>%</small></span><i class="dn">▼</i>
      </div>
      <hr>
      <div class="faux"><button><b>T</b></button><button><em>T</em></button><button>TT</button><button>T<small>T</small></button><button>T<sup>1</sup></button><button>T<sub>1</sub></button></div>
      <div class="lig"><label class="check"><input type="checkbox">连字</label><label class="check"><input type="checkbox">印地语数字</label></div>
    </section>
  </div>
</main>

<div class="lower">
  <section class="timeline">
    <div class="tabs"><a href="#" class="tab"><svg class="s6"><use href="#close"/></svg><i class="chip tan"></i>合成1<svg class="s8"><use href="#menu"/></svg></a></div>
    <div class="tbody">
      <div class="layers">
        <div class="ctl"><div class="clock"><b>00000</b><span>0:00:00:00 (25.00 fps)</span></div>
          <label class="search"><svg class="s17"><use href="#searchd"/></svg><input type="text" aria-label="搜索图层"></label>
          <div class="sw6"><svg><use href="#mini"/></svg><svg><use href="#draft"/></svg><svg><use href="#shyw"/></svg><svg><use href="#film"/></svg><svg><use href="#blur"/></svg><svg><use href="#graph"/></svg></div></div>
        <table><colgroup><col class="k1"><col class="k2"><col class="k2"><col><col class="k3"><col class="k4"><col class="k5"><col class="k6"></colgroup>
          <thead><tr>
            <th><span class="cells"><svg><use href="#eye"/></svg><svg><use href="#speaker"/></svg><svg class="d8"><use href="#dot"/></svg><svg><use href="#lock"/></svg></span></th>
            <th><svg class="s13 tag"><use href="#tag"/></svg></th><th class="num">#</th><th class="name">源名称</th>
            <th><span class="cells"><svg><use href="#shy"/></svg><svg><use href="#sun"/></svg><svg><use href="#qual"/></svg><em>fx</em><svg><use href="#film"/></svg><svg><use href="#blur"/></svg><svg><use href="#adj"/></svg><svg><use href="#cube"/></svg></span></th>
            <th class="mode"><span>模式</span><span class="t">T</span><span class="t m">TrkMat</span></th><th class="par">父级和链接</th><th></th></tr></thead>
          <tbody><tr>
            <td><span class="cells"><i><svg><use href="#eye"/></svg></i><i class="no"></i><i></i><i></i></span></td>
            <td><span class="lab"><svg><use href="#chev"/></svg><i></i></span></td><td class="num">1</td><td class="name"><svg class="s12"><use href="#star"/></svg>形状图层&nbsp; 1</td>
            <td><span class="cells"><i><svg><use href="#shy"/></svg></i><i class="mut"><svg><use href="#sun"/></svg></i><i><svg><use href="#slash"/></svg></i><i class="no"></i><i class="no"></i><i></i><i></i><i></i></span></td>
            <td><span class="mrow"><span class="sel-w w58"><select aria-label="模式"><option>正常</option></select><svg><use href="#chev"/></svg></span><i></i></span></td>
            <td><span class="mrow"><svg class="s12"><use href="#spiral"/></svg><span class="sel-w w89"><select aria-label="父级"><option>无</option></select><svg><use href="#chev"/></svg></span></span></td><td></td></tr></tbody></table>
      </div>
      <div class="tracks">
        <div class="nav"><i></i><i></i></div>
        <div class="ruler"><span>00000</span><span>00050</span><span>00100</span><span>00150</span><span>00200</span><span>00250</span><span>00300</span><span>00350</span><span>00400</span></div>
        <div class="area"><i></i><i></i></div>
        <div class="cache"><i></i></div>
        <div class="lane"><i></i></div>
        <div class="void"><i></i></div>
        <div class="head"><svg viewBox="0 0 11 13"><path d="M0 0h3v2h5V0h3v6l-5.500 6L0 6z" fill="#2d8ceb"/><path d="M4 5h3M5.500 5v4" stroke="#123"/></svg></div>
      </div>
      <div class="gutter"><svg class="g1"><use href="#shield"/></svg><svg class="g2"><use href="#bin"/></svg></div>
    </div>
    <footer class="tfoot"><span class="blue"><svg><use href="#lay"/></svg></span><span class="blue"><svg><use href="#modes"/></svg></span><span><svg><use href="#brace"/></svg></span>
      <div class="zoomer"><svg class="m1"><use href="#mtn"/></svg><input type="range" value="0" aria-label="缩放时间轴"><svg class="m2"><use href="#mtn"/></svg></div></footer>
  </section>
  <section class="panel align">
    <div class="tabs"><a href="#" class="tab cut"><span>跟踪器</span></a><a href="#" class="tab on">对齐<svg class="s8"><use href="#menu"/></svg></a><a href="#" class="tab cutr">段落</a><svg class="more"><use href="#more"/></svg></div>
    <div class="to"><label for="alignto">将图层对齐到:</label><span class="sel-w off"><select id="alignto" disabled><option>选区</option></select><svg><use href="#chev"/></svg></span></div>
    <div class="six"><svg><use href="#al1"/></svg><svg><use href="#al2"/></svg><svg><use href="#al3"/></svg><svg><use href="#al4"/></svg><svg><use href="#al5"/></svg><svg><use href="#al6"/></svg></div>
    <hr>
    <p>分布图层:</p>
    <div class="six"><svg><use href="#di1"/></svg><svg><use href="#di2"/></svg><svg><use href="#di3"/></svg><svg><use href="#di4"/></svg><svg><use href="#di5"/></svg><svg><use href="#di6"/></svg></div>
  </section>
</div>
</body>
</html>
```

FILE: styles.css
```css
* { box-sizing: border-box; }
html { background: #161616; }
body {
  margin: 0; min-height: 100vh;
  display: grid; grid-template-rows: 20px 25px minmax(0, 722fr) minmax(0, 337fr);
  font: 13px/16px Roboto, "Noto Sans CJK SC", sans-serif; color: #b4b4b4;
}
a { color: inherit; text-decoration: none; }
i { font-style: normal; }
svg { display: block; flex: none; }
button, input, select { font: inherit; color: inherit; background: none; border: 0; padding: 0; margin: 0; min-width: 0; border-radius: 0; outline: 0; }
button { display: flex; align-items: center; justify-content: center; }
h2, p, dl, dd { margin: 0; }
hr { height: 2px; border: 0; background: #303030; margin: 0 4px 0 5px; flex: none; }
.sprite { position: absolute; top: 0; left: 0; width: 0; height: 0; }
.blue { color: #2d8ceb; }
.mut { color: #8a8a8a; }
.dim2 { color: #484848; }
.s6 { width: 6px; height: 6px; }
.s8 { width: 8px; height: 8px; }
.s12 { width: 12px; height: 12px; }
.s13 { width: 13px; height: 13px; }
.s14 { width: 14px; height: 14px; }
.s15 { width: 15px; height: 15px; }
.s16 { width: 16px; height: 16px; }
.s17 { width: 17px; height: 13px; }
.s18 { width: 18px; height: 16px; }
.more { width: 10px; height: 8px; }
.sep { width: 7px; height: 21px; background: linear-gradient(#303030, #303030) center / 2px 100% no-repeat; flex: none; }

/* menu bar */
.menubar { background: #fff; border-bottom: 2px solid #eef0ee; display: flex; gap: 13px; padding-left: 6px; color: #000; font-size: 12px; line-height: 18px; }

/* toolbar */
.toolbar { background: #232323; display: flex; align-items: center; min-width: 0; color: #8a8a8a; }
.tools, .options, .spaces { display: flex; align-items: center; flex: none; }
.tools { width: 448px; padding-left: 3px; color: #b4b4b4; }
.grip { width: 3px; height: 19px; margin-right: 4px; background: repeating-linear-gradient(#3c3c3c 0 1px, transparent 1px 2px); }
.tool { width: 25px; height: 22px; position: relative; }
.tool.on { background: #161616; box-shadow: inset 0 0 0 1px #303030; border-radius: 2px; }
.tool.sub::after { content: ""; position: absolute; right: 1px; bottom: 1px; border: 2px solid transparent; border-right-color: #b4b4b4; border-bottom-color: #b4b4b4; }
.options { width: 641px; }
.starbox { width: 20px; height: 20px; border: 1px solid #303030; border-radius: 3px; color: #1f4470; margin: 0 3px 0 16px; }
.sep.wide { margin: 0 7px 0 15px; }
.fill, .stroke { width: 24px; height: 18px; margin: 0 14px 0 2px; border: 1px solid #999; background: #d8d8d8; flex: none; }
.stroke { background: #555; border: 2px solid #777; margin-right: 13px; }
.stroke svg { width: 24px; height: 18px; }
.px { margin-right: 15px; }
.add { margin-right: 3px; }
.check { display: flex; align-items: center; gap: 4px; }
.options .check { margin-left: 15px; }
.check input { appearance: none; width: 14px; height: 14px; border: 2px solid #8a8a8a; border-radius: 2px; background: #1a1a1a; flex: none; }
.spaces { flex: 1; }
.spaces a { margin-left: 47px; display: flex; gap: 10px; align-items: center; }
.spaces a:nth-of-type(1) { margin-left: 21px; }
.spaces a:nth-of-type(3) { margin-left: 27px; }
.spaces a:nth-of-type(4), .spaces a:nth-of-type(5) { margin-left: 46px; }
.spaces .more { margin: 0 7px 0 auto; color: #b4b4b4; }
.wsp { width: 19px; height: 12px; margin: 0 12px 0 2px; }
.help { flex: 0 0 196px; height: 19px; background: #161616; border: 1px solid #303030; border-radius: 3px; display: flex; align-items: center; padding-left: 6px; gap: 10px; color: #b4b4b4; font-size: 12px; }
.help input { flex: 1; }
.help input::placeholder { color: #ccc; opacity: 1; }

/* panels */
.work, .lower { display: grid; grid-template-rows: minmax(0, 1fr); column-gap: 4px; padding-top: 4px; min-width: 0; overflow: hidden; }
.work { grid-template-columns: 320px minmax(0, 1fr) 172px 204px; }
.lower { grid-template-columns: minmax(0, 1fr) 204px; }
.panel { background: #232323; display: flex; flex-direction: column; min-width: 0; overflow: hidden; }
.stack { display: flex; flex-direction: column; gap: 4px; min-width: 0; }
.tabs { height: 26px; display: flex; flex: none; color: #8a8a8a; white-space: nowrap; }
.tab { display: flex; align-items: center; border-bottom: 2px solid transparent; padding: 2px 0 0 3px; }
.tab .s8 { margin-left: 10px; color: #b4b4b4; }
.tab.on { color: #c4c4c4; border-color: #b4b4b4; }
.tabs > .more { margin: 9px 2px 0 auto; color: #b4b4b4; }
.chip { width: 10px; height: 10px; display: block; flex: none; }
.violet { background: #6a7de0; }
.tan { background: #a89472; }
.search { display: flex; align-items: center; height: 20px; background: #161616; border: 1px solid #303030; border-radius: 3px; padding-left: 6px; }
.search input { flex: 1; }

/* project */
.project .tabs { padding-left: 10px; }
.project .fx { margin-left: 34px; gap: 11px; }
.tsep { width: 1px; height: 20px; margin: 3px 0 0 auto; background: #303030; }
.project .tabs > .more { margin: 9px 4px 0 25px; }
.asset { display: flex; gap: 6px; padding: 6px; font-size: 11px; line-height: 13px; height: 113px; color: #9a9a9a; white-space: nowrap; }
.asset small { font-size: 8px; }
.asset b { font-size: 12px; color: #b4b4b4; }
.wh { color: #fff; font-size: 9px; }
.thumb { width: 8px; height: 65px; background: #000; margin-top: 2px; }
.project .search { margin: 0 6px 6px; }
table { border-collapse: collapse; table-layout: fixed; width: 100%; }
td, th { padding: 0; text-align: left; font-weight: 400; height: 19px; line-height: 16px; }
thead tr { background: #323232; border-top: 1px solid #0a0a0a; border-bottom: 1px solid #0a0a0a; color: #c4c4c4; }
.files .c1 { width: 34px; padding-left: 17px; }
.files thead .c1 { background: linear-gradient(#111, #111) 16px center / 1px 11px no-repeat; }
.nm { text-indent: -10px; }
.files .c3 { width: 18px; padding-left: 2px; }
.sel { background: #a0a0a0; color: #232323; font-size: 12px; font-weight: 700; padding-left: 3px; }
.pfoot { margin-top: auto; height: 19px; border-top: 1px solid #0a0a0a; display: flex; align-items: center; padding-left: 4px; gap: 10px; font-size: 10px; }
.bpc { width: 51px; height: 16px; border: 1px solid #303030; border-radius: 3px; margin: 0 -4px 0 -8px; color: #999; }
.pill { width: 54px; height: 15px; border-radius: 8px; background: #333; margin-left: -2px; }

/* viewer */
.viewer .tabs { padding-left: 11px; }
.viewer .cur { padding-left: 0; }
.viewer .tab + .tab { margin-left: 35px; }
.viewer .chip { margin: 0 10px 0 9px; }
.lk { width: 10px; height: 12px; margin-right: 9px; }
.viewer .cur .blue { margin-left: 6px; }
.crumbs { height: 26px; padding: 4px 0 0 19px; flex: none; }
.crumbs a { display: block; width: 70px; height: 18px; line-height: 14px; background: #161616; border: 1px solid #303030; border-radius: 2px; padding-left: 10px; }
.stage { flex: 1; border-top: 1px solid #0a0a0a; display: flex; justify-content: center; align-items: center; box-shadow: inset 0 1px #303030; }
.frame { width: 50px; height: 500px; background: #000; }
.ball { display: block; width: 50px; height: 50px; border-radius: 50%; background: #d8d8d8; }
.vfoot { height: 24px; flex: none; border-top: 1px solid #0a0a0a; display: flex; align-items: center; gap: 8px; padding-left: 5px; font-size: 12px; color: #b4b4b4; }
.sel-w { display: grid; align-items: center; height: 18px; border: 1px solid #303030; border-radius: 3px; background: #1c1c1c; flex: none; }
.sel-w select { grid-area: 1 / 1; width: 100%; height: 16px; line-height: 16px; appearance: none; padding-left: 6px; opacity: 1; }
.sel-w > svg { grid-area: 1 / 1; justify-self: end; width: 8px; height: 5px; margin-right: 4px; pointer-events: none; color: #999; }
.vfoot .sel-w { margin: 0 -4px; }
.w69 { width: 69px; } .w86 { width: 86px; } .w104 { width: 104px; } .w67 { width: 67px; }
.vfoot .w67 { margin: 0 -2px; }
.well { width: 21px; height: 18px; background: #161616; border-radius: 3px; margin: 0 -5px; }
.time { width: 68px; height: 18px; border: 1px solid #303030; border-radius: 3px; color: #8a8a8a; font-size: 11px; margin: 0 -3px 0 -1px; }
.vfoot .sep { margin: 0 -5px; }
.vfoot > .blue { font-size: 11px; }

/* script panels */
h2 { font-size: 11px; font-weight: 400; line-height: 28px; height: 28px; display: flex; align-items: center; gap: 12px; padding-left: 12px; flex: none; color: #c4c4c4; }
.motion { height: 338px; flex: none; font-size: 11px; }
.box { border: 1px solid #303030; border-radius: 3px; flex: 1; margin: 0 1px 1px 0; padding: 1px; overflow: hidden; }
.row { display: flex; justify-content: space-between; align-items: center; }
.big { height: 24px; font-size: 11px; color: #c4c4c4; }
.w134 { width: 134px; } .w137 { width: 137px; }
.tri { width: 11px; height: 12px; }
.motion .row { margin-bottom: 12px; }
.ease { display: grid; grid-template-columns: 12px 1fr 24px; align-items: center; height: 26px; column-gap: 12px; padding-left: 6px; }
.ease svg { width: 12px; height: 10px; }
.ease input[type=range] { margin-left: -3px; width: auto; }
input[type=text] { color: #c4c4c4; }
.ease input[type=text] { height: 20px; background: #161616; border: 1px solid #303030; border-right: 0; border-radius: 3px 0 0 3px; padding-left: 5px; }
input[type=range] { appearance: none; height: 16px; width: 100%; background: linear-gradient(#484848, #484848) center / 100% 2px no-repeat; }
input[type=range]::-webkit-slider-thumb { appearance: none; width: 14px; height: 14px; border: 2px solid #969696; border-radius: 50%; background: #232323; box-shadow: 0 0 0 3px #232323; }
.acts { display: grid; grid-template-columns: 73px 1fr 18px; margin-top: 6px; padding-left: 6px; }
.acts button { height: 26px; justify-content: flex-start; gap: 4px; font: 600 9px/12px Inter, Roboto, sans-serif; color: #ccc; text-shadow: 0 0 2px #000, 0 0 2px #000; }
.acts svg { width: 15px; height: 14px; filter: drop-shadow(0 0 1px #000); }
.motion .launch { margin: 9px 0 0; }
.go { width: 22px; height: 24px; border: 1px solid #777; border-right: 0; background: #232323; box-shadow: inset 0 0 0 1px #111; }
.circle { flex: 1; font-size: 11px; color: #8a8a8a; }
.circle .box { padding: 5px 2px 0; margin-bottom: 0; border-bottom: 0; }
fieldset { border: 1px solid #303030; border-radius: 3px; margin: 0 0 4px; padding: 0 1px; height: 30px; min-width: 0; }
legend { line-height: 10px; margin-left: 6px; padding: 0 6px; }
fieldset label { display: flex; align-items: center; gap: 4px; height: 13px; line-height: 13px; }
input[type=radio] { appearance: none; width: 14px; height: 14px; border: 2px solid #969696; border-radius: 50%; background: #1a1a1a; flex: none; }
input[type=radio]:checked { background: #969696; background-clip: padding-box; border-color: transparent; box-shadow: inset 0 0 0 5px #969696; border-width: 1px; }
.three { display: grid; grid-template-columns: 54px 54px 1fr; align-content: start; }
.two { display: grid; grid-template-columns: 63px 1fr; align-content: start; }
.half { display: grid; grid-template-columns: 86px 1fr; }
.sl { display: grid; grid-template-columns: 1fr 43px; column-gap: 9px; align-items: center; align-content: start; }
.sl input[type=text] { height: 18px; background: #161616; border-radius: 2px; padding-left: 5px; }
.sl input[type=range] { width: auto; }
.sl input[type=range]::-webkit-slider-thumb { width: 16px; height: 16px; }
.sl.a input[type=range] { margin-left: 10px; }
.sl.b { grid-template-columns: 1fr 39px; }
.sl.c input[type=range] { margin-left: 8px; }
.dist { height: 65px; margin-bottom: 1px; }
.dist .sl { margin: 10px 0 0; }
.off { color: #484848; }
.sl.off input[type=text] { color: #484848; background: #282828; }
.sl.off input[type=range]::-webkit-slider-thumb { border-color: #484848; }
.checks { border: 1px solid #303030; border-radius: 3px; height: 26px; display: grid; grid-template-columns: 94px 1fr; padding: 0 1px; margin-bottom: 1px; align-content: start; }
.checks .check { height: 21px; }
.btns { display: grid; grid-template-columns: 1fr 25px 25px; column-gap: 10px; }
.btns button { height: 20px; border: 1px solid #777; }

/* info, preview */
.info { height: 142px; flex: none; }
.info .tabs, .preview .tabs { padding-left: 11px; }
.info .tab + .tab { margin-left: 22px; }
.readout { display: flex; font-size: 11px; line-height: 13px; color: #8a8a8a; padding: 7px 0 0 8px; height: 65px; }
.sw { width: 20px; height: 20px; background: #000; margin: 12px 6px 0 0; }
.readout dl { display: grid; grid-template-columns: 16px auto; grid-auto-rows: 13px; align-content: start; white-space: nowrap; }
.readout dl:first-of-type { width: 67px; grid-template-columns: 18px auto; }
.bar { width: 2px; height: 50px; background: #303030; margin-top: 2px; }
.cross { width: 9px; height: 9px; margin: 22px 4px 0 9px; color: #b4b4b4; }
.preview { height: 56px; flex: none; }
.preview .tab { color: #b4b4b4; }
.transport { display: flex; justify-content: center; gap: 12px; padding: 10px 2px 0 0; }
.transport svg { width: 12px; height: 10px; }

/* character */
.chars { flex: 1; font-size: 13px; }
.chars .tabs { justify-content: space-between; }
.chars .tab:first-child { padding-left: 1px; }
.chars .tabs > .more { margin-left: 0; }
.chars .tab.on { margin: 0 -4px 0 1px; }
.fonts { display: flex; padding: 10px 4px 5px 5px; gap: 4px; height: 58px; }
.fsel { width: 123px; display: grid; gap: 5px; align-content: start; }
.fsel .sel-w { height: 19px; color: #c4c4c4; background: linear-gradient(#303030, #303030) right 18px top / 1px 100% no-repeat #161616; }
.fsel select { padding-left: 8px; }
.drop { width: 20px; padding: 3px 0 0 2px; }
.bw { display: block; width: 20px; height: 18px; margin: 6px 0 0 -2px; border: 1px solid #999; background: linear-gradient(#000 0 45%, #999 45% 55%, #fff 55%); }
.swatches { width: 44px; height: 44px; margin-left: 2px; }
.met { display: grid; grid-template-columns: 25px 52px 28px 25px 56px 10px; grid-auto-rows: 20px; align-items: center; padding: 1px 0 7px 5px; white-space: nowrap; }
.met.tall { padding: 1px 0 7px 5px; grid-auto-rows: 21px; }
.v b { color: #2d8ceb; font-weight: 400; font-size: 12px; }
.v b.cj { font-size: 13px; }
.v small { font-size: 12px; }
.v { color: #8a8a8a; }
.met .dim2 { color: #484848; }
.dn { font-size: 9px; color: #8a8a8a; }
.ic { font-family: "Liberation Serif", serif; font-size: 19px; font-weight: 700; display: flex; align-items: flex-end; line-height: 15px; color: #b4b4b4; }
.ic small { font-size: 13px; line-height: 13px; }
.vr { width: 5px; height: 14px; }
.hr { width: 18px; height: 5px; }
.ar { width: 8px; height: 5px; margin-left: 8px; }
.bl { width: 15px; height: 6px; }
.in { width: 16px; height: 5px; }
.lead { font: 10px/9px Roboto, sans-serif; }
.lead u { display: block; padding: 0 2px; }
.va { font: 13px/12px Roboto, sans-serif; }
.va sup { font-size: 9px; line-height: 8px; vertical-align: 2px; }
.va, .vab, .tw, .tsu { flex-direction: column; align-items: flex-start; }
.vab span { font: 700 11px/11px Roboto, sans-serif; background: #b4b4b4; color: #232323; width: 18px; text-align: center; }
.vab span, .tw span { margin-bottom: 1px; }
.tw span { width: 18px; text-align: center; line-height: 13px; }
.tsu { font: 12px/12px "Noto Sans CJK SC", sans-serif; }
.tsu span { width: 16px; text-align: center; border: 1px dotted #8a8a8a; border-width: 0 1px; }
.line { display: grid; grid-template-columns: 25px 53px 10px 1fr; align-items: center; height: 29px; padding: 0 4px 2px 7px; }
.faux { display: flex; justify-content: center; height: 28px; padding-left: 7px; font: 17px/20px "Liberation Serif", serif; color: #b4b4b4; gap: 5px; flex: none; }
.faux button { min-width: 22px; display: block; height: 28px; line-height: 26px; }
.faux small { font-size: 13px; }
.faux sup, .faux sub { font-size: 9px; line-height: 0; }
.lig { display: grid; grid-template-columns: 98px 1fr; padding: 4px 0 0 11px; color: #8a8a8a; line-height: 18px; }

/* timeline */
.timeline { background: #232323; border: 1px solid #2d8ceb; display: flex; flex-direction: column; min-width: 0; }
.timeline > .tabs { padding-left: 7px; }
.timeline .tab { color: #b4b4b4; padding-top: 0; }
.timeline .chip { margin: 0 13px 0 9px; }
.timeline .tab .s8 { margin-left: 13px; }
.tbody { flex: 1; display: grid; grid-template-columns: 895px minmax(0, 1fr) 17px; min-height: 0; }
.ctl { display: flex; height: 36px; align-items: center; }
.clock { width: 152px; text-align: center; color: #1c4f88; font: 10px/14px "Liberation Mono", monospace; white-space: nowrap; }
.clock b { display: block; color: #2d8ceb; font: 700 15px/15px Roboto, sans-serif; }
.ctl .search { flex: 1; }
.sw6 { display: flex; width: 201px; padding-left: 16px; gap: 14px; align-items: center; }
.sw6 svg { width: 16px; height: 15px; }
.k1 { width: 67px; } .k2 { width: 33px; } .k3 { width: 147px; } .k4 { width: 143px; } .k5 { width: 117px; } .k6 { width: 16px; }
.layers th { background: linear-gradient(#111, #111) right center / 1px 11px no-repeat; }
.layers tbody tr { background: #2e2e2e; }
.cells { display: flex; padding-left: 3px; }
.cells > * { width: 13px; height: 13px; margin: 0 1px; }
.cells > svg { padding: 1px; }
.cells em { font: italic 13px/13px "Liberation Serif", serif; }
td .cells i { background: #222; }
td .cells i.no { background: none; }
td .cells svg { width: 13px; height: 13px; padding: 1px; }
.cells .d8 { padding: 2px; }
.tag { margin-left: 13px; }
.num { padding-left: 6px; font-size: 11px; color: #9a9a9a; }
td.num { font-size: 13px; }
th.name { padding-left: 7px; }
td.name { font-weight: 700; font-size: 12px; }
td.name svg { display: inline-block; margin: 0 8px 0 5px; vertical-align: -1px; }
.mode span { display: inline-block; width: 65px; padding-left: 7px; }
.mode .t { width: auto; font-size: 11px; color: #9a9a9a; padding-left: 7px; }
.mode .m { padding-left: 10px; }
.par { padding-left: 7px; }
.lab { display: flex; align-items: center; justify-content: space-between; }
.lab svg { width: 8px; height: 5px; transform: rotate(-90deg); margin-left: 5px; }
.lab i { width: 15px; height: 15px; background: #6a7de0; }
.mrow { display: flex; align-items: center; gap: 6px; padding-left: 4px; }
.mrow i { width: 13px; height: 13px; background: #222; }
.mrow .sel-w { border: 0; height: 17px; color: #b4b4b4; border-radius: 0; }
.w58 { width: 58px; } .w89 { width: 89px; }
.tracks { border-left: 1px solid #0a0a0a; display: flex; flex-direction: column; position: relative; padding-top: 6px; min-width: 0; overflow: hidden; }
.nav, .area { display: flex; justify-content: space-between; flex: none; }
.nav { height: 10px; background: #6b6b6b; border: 1px solid #0a0a0a; border-width: 1px 0; border-radius: 5px 5px 0 0; }
.nav i { width: 8px; background: #2d8ceb; border-radius: 5px 0 0 0; }
.nav i + i, .area i + i { border-radius: 0 5px 0 0; width: 7px; }
.ruler { height: 19px; flex: none; display: flex; justify-content: space-between; padding: 0 7px; font-size: 10px; line-height: 12px; color: #9a9a9a; }
.ruler span { width: 0; display: flex; flex-direction: column; align-items: center; }
.ruler span::after { content: ""; width: 1px; height: 5px; background: #9a9a9a; margin-top: 2px; flex: none; }
.area { height: 16px; background: #5f5f5f; border-top: 1px solid #0a0a0a; margin: 0 1px; }
.area i { width: 6px; background: #2d8ceb; border-radius: 4px 0 0 4px; }
.cache, .lane, .void { padding: 0 7px; }
.cache { height: 5px; flex: none; border-top: 1px solid #0a0a0a; border-bottom: 1px solid #0a0a0a; }
.cache i { display: block; height: 3px; background: #18c020; }
.lane { height: 19px; flex: none; background: #2e2e2e; padding-top: 2px; padding-bottom: 2px; }
.lane i { display: block; height: 16px; background: #535c8c; border-top: 1px solid #666fa0; border-bottom: 1px solid #454c78; }
.void { flex: 1; display: flex; border-top: 1px solid #222; }
.void i { flex: 1; background: #303030; }
.head { position: absolute; left: 7px; top: 23px; bottom: 0; width: 1px; background: #2d8ceb; }
.head svg { width: 11px; height: 13px; margin-left: -5px; }
.gutter { padding-top: 38px; }
.g1 { width: 12px; height: 14px; margin-left: 4px; }
.g2 { width: 14px; height: 12px; margin: 7px 0 0 1px; }
.tfoot { height: 17px; flex: none; border-top: 1px solid #0a0a0a; display: flex; align-items: center; gap: 6px; padding-left: 6px; }
.tfoot > span svg { width: 12px; height: 12px; }
.zoomer { margin-left: 841px; display: flex; align-items: center; gap: 11px; }
.zoomer input { width: 49px; height: 10px; }
.zoomer input::-webkit-slider-thumb { width: 10px; height: 10px; }
.m1 { width: 10px; height: 5px; }
.m2 { width: 16px; height: 8px; }

/* align */
.cut { width: 36px; padding-left: 0; justify-content: flex-end; overflow: hidden; }
.align .tab.on { margin-left: 40px; }
.cutr { width: 18px; margin-left: 25px; padding-left: 0; overflow: hidden; box-shadow: 1px 0 #303030; }
.to { display: grid; grid-template-columns: auto 1fr; column-gap: 4px; align-items: center; padding: 4px 0 6px 8px; color: #8a8a8a; white-space: nowrap; }
.to .sel-w { border: 0; background: #282828; }
.to .off svg, .to select { color: #484848; opacity: 1; }
.to select { padding-left: 9px; }
.six { display: flex; justify-content: space-between; padding: 0 5px 0 11px; color: #3e3e3e; }
.six svg { width: 18px; height: 18px; }
.align hr { margin-top: 5px; }
.align p { padding: 0 0 0 8px; color: #8a8a8a; height: 19px; line-height: 15px; }
```
